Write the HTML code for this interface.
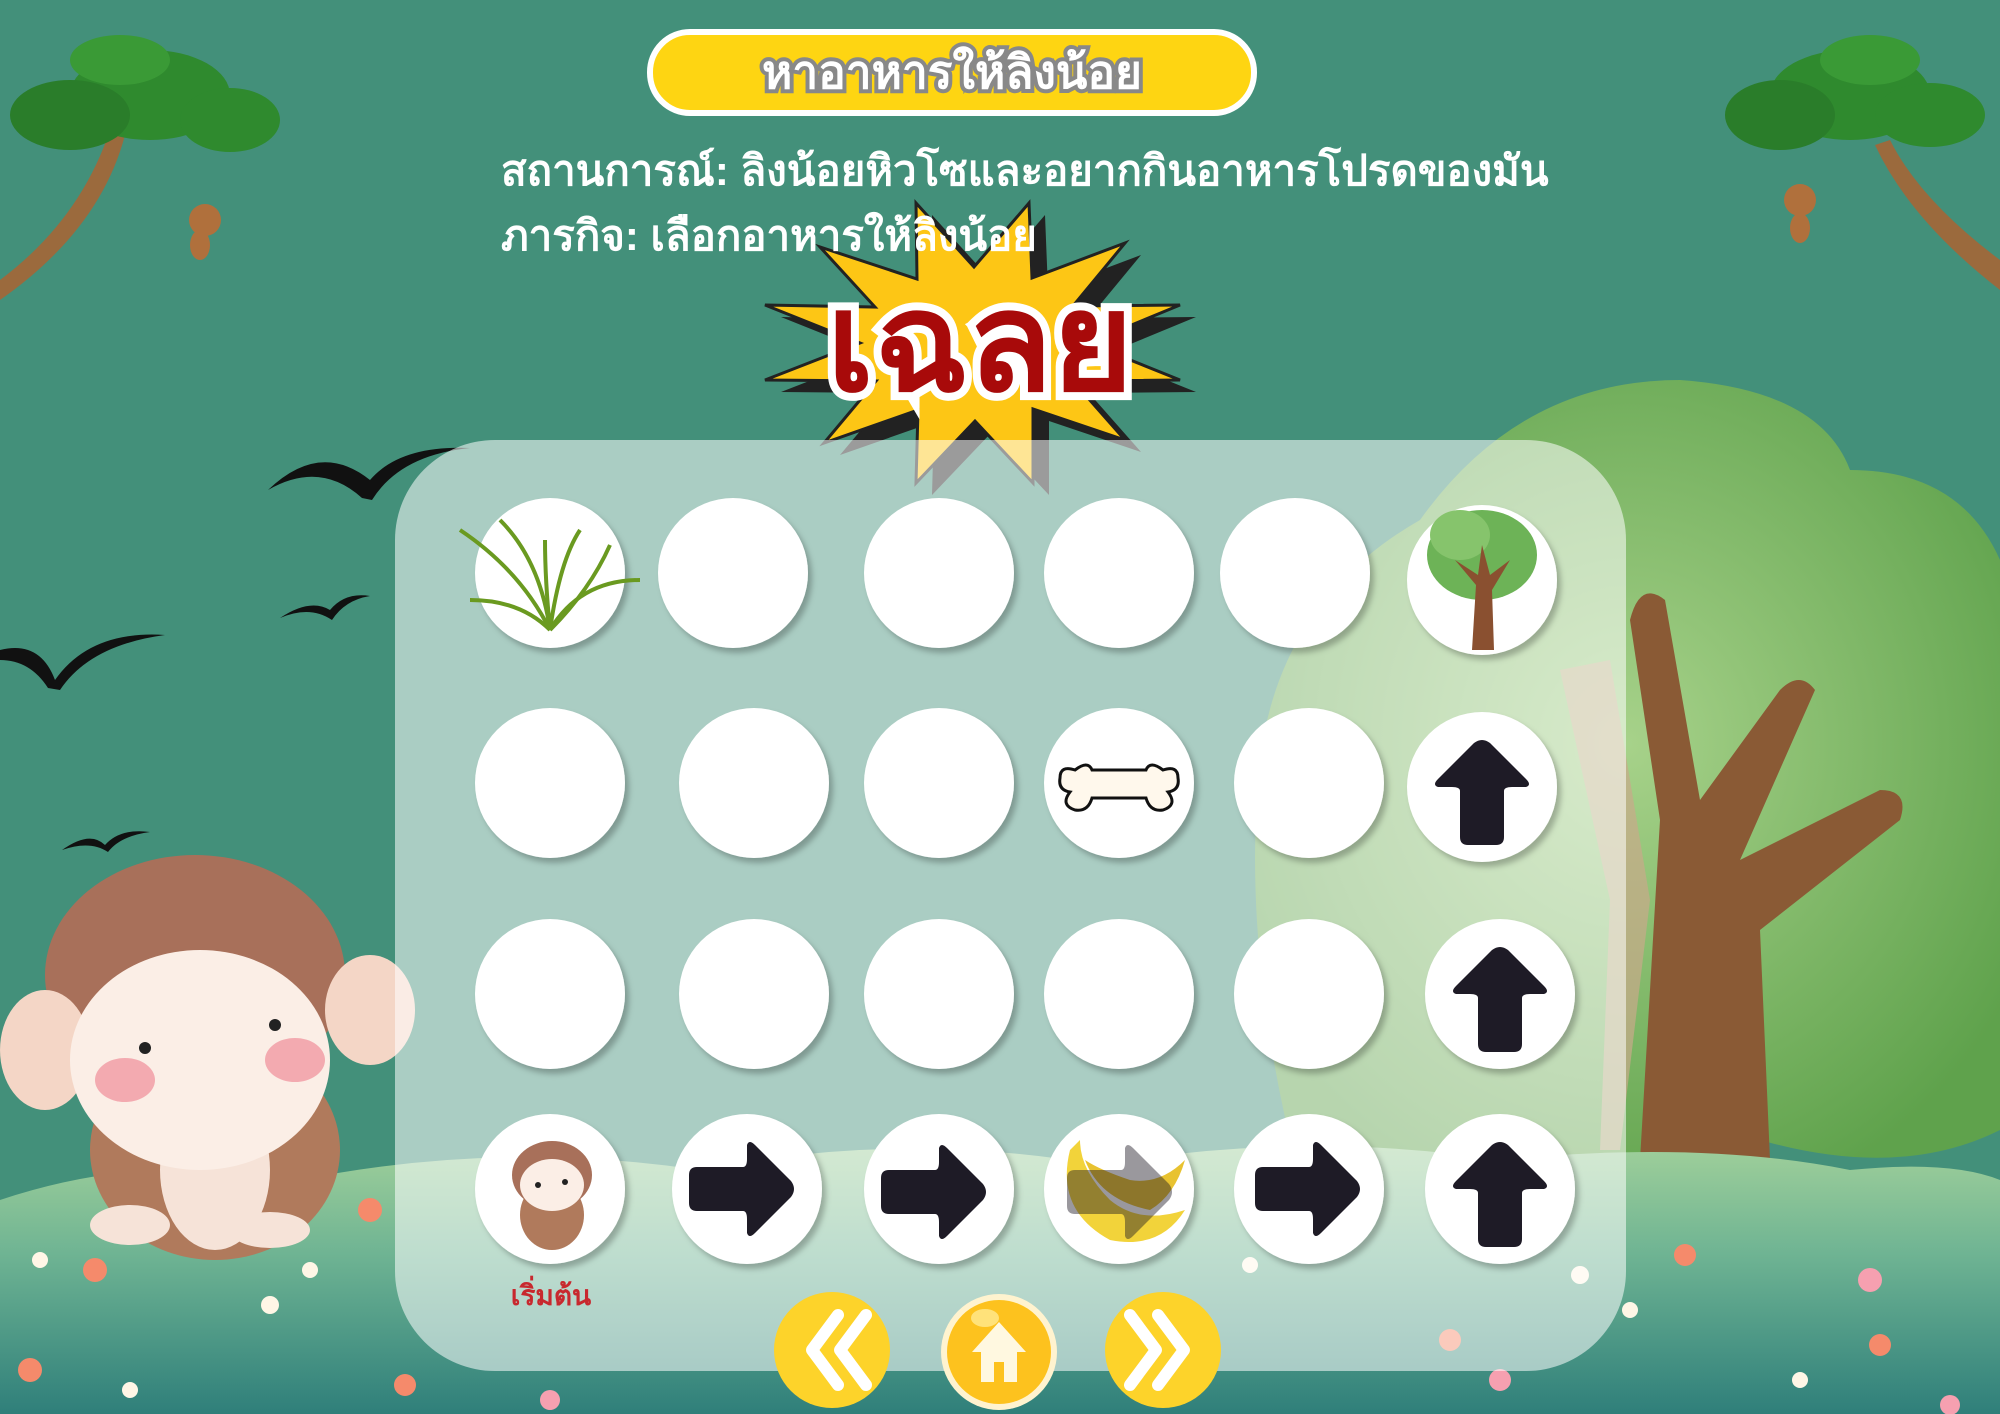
<!DOCTYPE html>
<html><head><meta charset="utf-8"><style>
html,body{margin:0;padding:0;width:2000px;height:1414px;overflow:hidden;background:#43907A}
svg{display:block}
text{font-family:"Liberation Sans","Noto Sans CJK SC",sans-serif}
</style></head><body>
<svg width="2000" height="1414" viewBox="0 0 2000 1414" xmlns="http://www.w3.org/2000/svg">
<defs>
<filter id="sh" x="-20%" y="-20%" width="140%" height="140%"><feDropShadow dx="4" dy="5" stdDeviation="3" flood-color="#000" flood-opacity="0.25"/></filter>
<linearGradient id="gr" x1="0" y1="0" x2="0" y2="1"><stop offset="0" stop-color="#9fcf9a"/><stop offset="0.4" stop-color="#6fb493"/><stop offset="1" stop-color="#2f7f7a"/></linearGradient>
<radialGradient id="tb" cx="0.5" cy="0.45" r="0.6"><stop offset="0" stop-color="#a7d28a"/><stop offset="1" stop-color="#5fa24c"/></radialGradient>
<path id="ar" d="M-50,-22 Q-58,-22 -58,-14 L-58,14 Q-58,22 -50,22 L-4,22 Q0,22 0,30 L0,44 Q2,50 8,44 L44,8 Q50,0 44,-8 L8,-44 Q2,-50 0,-44 L0,-30 Q0,-22 -4,-22 Z" fill="#1e1b26"/>
</defs>
<!-- right big tree -->
<path d="M1300,1180 Q1240,950 1260,760 Q1280,600 1420,520 Q1520,380 1680,380 Q1820,390 1850,470 Q1960,470 2000,560 L2000,1130 Q1900,1180 1760,1140 Q1600,1200 1440,1170 Q1360,1200 1300,1180Z" fill="url(#tb)"/>
<path d="M1640,1160 L1660,820 L1630,620 Q1640,580 1665,600 L1700,800 L1780,690 Q1800,670 1815,690 L1740,860 L1880,790 Q1910,790 1900,820 L1760,930 L1770,1160Z" fill="#8a5a35"/>
<path d="M1560,670 L1610,660 L1650,900 L1620,1150 L1600,1150 L1610,900Z" fill="#c9a98a" opacity="0.7"/>
<!-- corner trees -->
<g>
<path d="M0,280 Q80,220 110,130 L125,135 Q100,230 0,300Z" fill="#9b6a3d"/>
<ellipse cx="150" cy="95" rx="80" ry="45" fill="#2f8a2e"/><ellipse cx="70" cy="115" rx="60" ry="35" fill="#2a7d2a"/><ellipse cx="230" cy="120" rx="50" ry="32" fill="#2f8a2e"/><ellipse cx="120" cy="60" rx="50" ry="25" fill="#3a9a36"/>
<circle cx="205" cy="220" r="16" fill="#b0703c"/><ellipse cx="200" cy="245" rx="10" ry="15" fill="#b0703c"/>
</g>
<g>
<path d="M2000,260 Q1920,200 1890,140 L1875,145 Q1910,220 2000,290Z" fill="#9b6a3d"/>
<ellipse cx="1850" cy="95" rx="80" ry="45" fill="#2f8a2e"/><ellipse cx="1780" cy="115" rx="55" ry="35" fill="#2a7d2a"/><ellipse cx="1930" cy="115" rx="55" ry="32" fill="#2f8a2e"/><ellipse cx="1870" cy="60" rx="50" ry="25" fill="#3a9a36"/>
<circle cx="1800" cy="200" r="16" fill="#b0703c"/><ellipse cx="1800" cy="228" rx="10" ry="15" fill="#b0703c"/>
</g>
<!-- birds -->
<g fill="#111">
<path d="M268,490 Q320,440 370,480 Q400,445 470,448 Q400,455 372,500 L362,498 Q320,460 268,490Z"/>
<path d="M280,618 Q310,598 330,610 Q345,592 370,596 Q345,600 332,620 Q310,605 280,618Z"/>
<path d="M0,650 Q40,640 55,680 Q90,630 165,635 Q90,645 60,690 L48,688 Q30,660 0,660Z"/>
<path d="M62,850 Q90,830 105,845 Q120,828 150,832 Q120,836 108,852 Q90,840 62,850Z"/>
</g>
<!-- ground -->
<path d="M0,1200 Q150,1150 300,1180 Q500,1140 700,1170 Q900,1130 1100,1165 Q1300,1130 1500,1160 Q1700,1140 1850,1170 Q1950,1160 2000,1180 L2000,1414 L0,1414Z" fill="url(#gr)"/>
<g fill="#f58a6b"><circle cx="30" cy="1370" r="12"/><circle cx="95" cy="1270" r="12"/><circle cx="370" cy="1210" r="12"/><circle cx="405" cy="1385" r="11"/><circle cx="1450" cy="1340" r="11"/><circle cx="1685" cy="1255" r="11"/><circle cx="1880" cy="1345" r="11"/></g>
<g fill="#f6a0b0"><circle cx="1870" cy="1280" r="12"/><circle cx="1500" cy="1380" r="11"/><circle cx="550" cy="1400" r="10"/><circle cx="1950" cy="1405" r="10"/></g>
<g fill="#fff6e6"><circle cx="40" cy="1260" r="8"/><circle cx="130" cy="1390" r="8"/><circle cx="270" cy="1305" r="9"/><circle cx="310" cy="1270" r="8"/><circle cx="1250" cy="1265" r="8"/><circle cx="1580" cy="1275" r="9"/><circle cx="1800" cy="1380" r="8"/><circle cx="1630" cy="1310" r="8"/></g>
<!-- big monkey -->
<g>
<ellipse cx="215" cy="1150" rx="125" ry="110" fill="#b07a5c"/>
<ellipse cx="215" cy="1170" rx="55" ry="80" fill="#f6e3d8"/>
<ellipse cx="195" cy="975" rx="150" ry="120" fill="#a8705a"/>
<ellipse cx="45" cy="1050" rx="45" ry="60" fill="#f4d6c6"/>
<ellipse cx="370" cy="1010" rx="45" ry="55" fill="#f4d6c6"/>
<ellipse cx="200" cy="1060" rx="130" ry="110" fill="#fbeee6"/>
<ellipse cx="125" cy="1080" rx="30" ry="22" fill="#f3aab0"/><ellipse cx="295" cy="1060" rx="30" ry="22" fill="#f3aab0"/>
<circle cx="145" cy="1048" r="6" fill="#222"/><circle cx="275" cy="1025" r="6" fill="#222"/>
<ellipse cx="130" cy="1225" rx="40" ry="20" fill="#f6e3d8"/><ellipse cx="270" cy="1230" rx="40" ry="18" fill="#f6e3d8"/>
</g>
<!-- starburst -->
<polygon transform="translate(16,12)" fill="#222" points="916,203 974,267 1029,203 1032,278 1125,243 1073,306 1180,305 1088,343 1180,380 1073,381 1125,440 1033,409 1033,483 975,421 916,483 918,410 824,443 876,381 765,380 860,343 765,305 875,307 820,247 917,279"/>
<polygon fill="#fdc615" stroke="#222" stroke-width="3" points="916,203 974,267 1029,203 1032,278 1125,243 1073,306 1180,305 1088,343 1180,380 1073,381 1125,440 1033,409 1033,483 975,421 916,483 918,410 824,443 876,381 765,380 860,343 765,305 875,307 820,247 917,279"/>
<!-- panel -->
<rect x="395" y="440" width="1231" height="931" rx="100" fill="#ffffff" opacity="0.55"/>
<!-- title -->
<rect x="650" y="32" width="604" height="81" rx="40" fill="#FED512" stroke="#fff" stroke-width="6"/>
<text x="952" y="88" text-anchor="middle" font-size="46" font-weight="bold" fill="#fff" stroke="#888" stroke-width="8" paint-order="stroke">หาอาหารให้ลิงน้อย</text>
<text x="501" y="185" font-size="42" font-weight="bold" fill="#fff">สถานการณ์: ลิงน้อยหิวโซและอยากกินอาหารโปรดของมัน</text>
<text x="501" y="250" font-size="42" font-weight="bold" fill="#fff">ภารกิจ: เลือกอาหารให้ลิงน้อย</text>
<text x="980" y="390" text-anchor="middle" font-size="138" font-weight="bold" fill="#a80a0a" stroke="#fff" stroke-width="16" paint-order="stroke">เฉลย</text>
<!-- circles -->
<g fill="#fff" filter="url(#sh)">
<circle cx="550" cy="573" r="75"/><circle cx="733" cy="573" r="75"/><circle cx="939" cy="573" r="75"/><circle cx="1119" cy="573" r="75"/><circle cx="1295" cy="573" r="75"/><circle cx="1482" cy="580" r="75"/>
<circle cx="550" cy="783" r="75"/><circle cx="754" cy="783" r="75"/><circle cx="939" cy="783" r="75"/><circle cx="1119" cy="783" r="75"/><circle cx="1309" cy="783" r="75"/><circle cx="1482" cy="787" r="75"/>
<circle cx="550" cy="994" r="75"/><circle cx="754" cy="994" r="75"/><circle cx="939" cy="994" r="75"/><circle cx="1119" cy="994" r="75"/><circle cx="1309" cy="994" r="75"/><circle cx="1500" cy="994" r="75"/>
<circle cx="550" cy="1189" r="75"/><circle cx="747" cy="1189" r="75"/><circle cx="939" cy="1189" r="75"/><circle cx="1119" cy="1189" r="75"/><circle cx="1309" cy="1189" r="75"/><circle cx="1500" cy="1189" r="75"/>
</g>
<!-- grass -->
<g stroke="#6a9a20" stroke-width="4" fill="none">
<path d="M550,630 Q520,570 460,530"/><path d="M550,630 Q540,560 500,520"/><path d="M550,630 Q560,560 580,530"/><path d="M550,630 Q580,580 640,580"/><path d="M550,630 Q520,600 470,600"/><path d="M550,630 Q545,580 545,540"/><path d="M550,630 Q590,590 610,545"/>
</g>
<!-- tree icon -->
<ellipse cx="1482" cy="555" rx="55" ry="45" fill="#6db357"/><ellipse cx="1460" cy="535" rx="30" ry="25" fill="#86c46c"/>
<path d="M1472,650 L1476,585 L1455,560 L1478,575 L1482,545 L1490,575 L1510,560 L1492,590 L1494,650Z" fill="#8a5030"/>
<!-- bone -->
<path d="M1075,770 Q1060,765 1060,778 Q1058,790 1070,792 Q1060,805 1075,810 Q1088,812 1092,798 L1146,798 Q1150,812 1163,810 Q1178,805 1168,792 Q1180,790 1178,778 Q1178,765 1163,770 Q1150,760 1146,770 L1092,770 Q1088,760 1075,770Z" fill="#fff8ec" stroke="#111" stroke-width="3"/>
<!-- arrows -->
<use href="#ar" transform="translate(1482,787) rotate(-90)"/>
<use href="#ar" transform="translate(1500,994) rotate(-90)"/>
<use href="#ar" transform="translate(1500,1189) rotate(-90)"/>
<use href="#ar" transform="translate(747,1189)"/>
<use href="#ar" transform="translate(939,1192)"/>
<use href="#ar" transform="translate(1313,1189)"/>
<!-- banana -->
<path d="M1070,1150 Q1055,1210 1110,1240 Q1160,1250 1185,1210 Q1140,1225 1110,1200 Q1080,1170 1080,1140Z" fill="#f2d33a"/>
<path d="M1085,1160 Q1100,1200 1150,1210 Q1175,1195 1185,1160 Q1160,1185 1130,1180 Q1100,1170 1085,1160Z" fill="#e8c230"/>
<use href="#ar" transform="translate(1125,1192)" opacity="0.45"/>
<!-- small monkey -->
<ellipse cx="552" cy="1215" rx="32" ry="35" fill="#b07a5c"/>
<ellipse cx="552" cy="1175" rx="40" ry="34" fill="#a8705a"/>
<ellipse cx="552" cy="1185" rx="32" ry="26" fill="#fbeee6"/>
<circle cx="538" cy="1185" r="3" fill="#222"/><circle cx="565" cy="1182" r="3" fill="#222"/>
<text x="551" y="1305" text-anchor="middle" font-size="28" font-weight="bold" fill="#c8282e">เริ่มต้น</text>
<!-- buttons -->
<circle cx="832" cy="1350" r="58" fill="#FDD32A"/>
<path d="M838,1315 L812,1350 L838,1385 M866,1315 L840,1350 L866,1385" stroke="#fff" stroke-width="12" fill="none" stroke-linecap="round" stroke-linejoin="round"/>
<circle cx="999" cy="1352" r="58" fill="#fff3cf"/><circle cx="999" cy="1352" r="52" fill="#FDC21E"/>
<ellipse cx="985" cy="1318" rx="14" ry="9" fill="#ffe27a"/>
<path d="M999,1322 L972,1352 L981,1352 L981,1382 L994,1382 L994,1362 L1004,1362 L1004,1382 L1017,1382 L1017,1352 L1026,1352Z" fill="#fff8e0"/>
<circle cx="1163" cy="1350" r="58" fill="#FDD32A"/>
<path d="M1130,1315 L1156,1350 L1130,1385 M1158,1315 L1184,1350 L1158,1385" stroke="#fff" stroke-width="12" fill="none" stroke-linecap="round" stroke-linejoin="round"/>
</svg>
</body></html>
